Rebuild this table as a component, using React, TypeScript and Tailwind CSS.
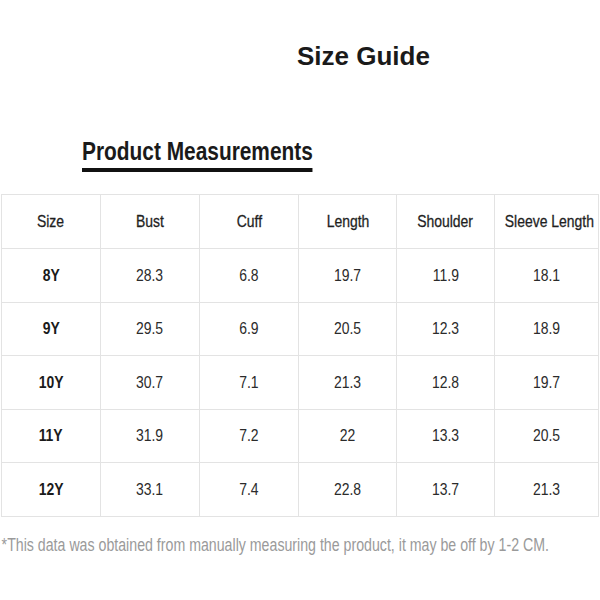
const headers = ['Size', 'Bust', 'Cuff', 'Length', 'Shoulder', 'Sleeve Length']

const rows = [
  ['8Y', '28.3', '6.8', '19.7', '11.9', '18.1'],
  ['9Y', '29.5', '6.9', '20.5', '12.3', '18.9'],
  ['10Y', '30.7', '7.1', '21.3', '12.8', '19.7'],
  ['11Y', '31.9', '7.2', '22', '13.3', '20.5'],
  ['12Y', '33.1', '7.4', '22.8', '13.7', '21.3'],
]

// the picture uses a condensed face; no narrow font is installed, so squeeze horizontally
function Narrow({ children }: { children: React.ReactNode }) {
  return <span className="inline-block whitespace-nowrap scale-x-[0.82] origin-center">{children}</span>
}

export default function App() {
  return (
    <div className="w-[600px] h-[600px] bg-white overflow-hidden font-['Liberation_Sans',Arial,sans-serif]">
      <div className="pt-[38px] pl-[297px]">
        <h1 className="text-[26px] leading-[36px] font-bold text-[#1a1a1a]">Size Guide</h1>
      </div>

      <div className="mt-[62px] pl-[82px]">
        <h2 className="inline-block whitespace-nowrap origin-left scale-x-[0.835] text-[25px] leading-[30px] pb-[2px] font-bold text-[#1a1a1a] border-b-[4px] border-[#111]">
          Product Measurements
        </h2>
      </div>

      <table className="mt-[22px] ml-[1px] w-[597px] border-collapse table-fixed">
        <colgroup>
          <col className="w-[99px]" />
          <col className="w-[99px]" />
          <col className="w-[99px]" />
          <col className="w-[98px]" />
          <col className="w-[98px]" />
          <col className="w-[104px]" />
        </colgroup>
        <thead>
          <tr className="h-[54px]">
            {headers.map((h) => (
              <th key={h} className="border border-[#e3e3e3] text-[17px] font-normal text-[#1f1f1f] text-center [-webkit-text-stroke:0.3px_#1f1f1f]">
                <Narrow>{h}</Narrow>
              </th>
            ))}
          </tr>
        </thead>
        <tbody>
          {rows.map((row) => (
            <tr key={row[0]} className="h-[53.6px]">
              {row.map((cell, i) => (
                <td
                  key={i}
                  className={
                    'border border-[#e3e3e3] text-[17px] text-center ' +
                    (i === 0 ? 'font-bold text-[#1a1a1a]' : 'font-normal text-[#2b2b2b]')
                  }
                >
                  <Narrow>{cell}</Narrow>
                </td>
              ))}
            </tr>
          ))}
        </tbody>
      </table>

      <p className="mt-[15px] pl-[2px] whitespace-nowrap origin-left scale-x-[0.81] text-[17.5px] text-[#9a9a9a]">
        *This data was obtained from manually measuring the product, it may be off by 1-2 CM.
      </p>
    </div>
  )
}
